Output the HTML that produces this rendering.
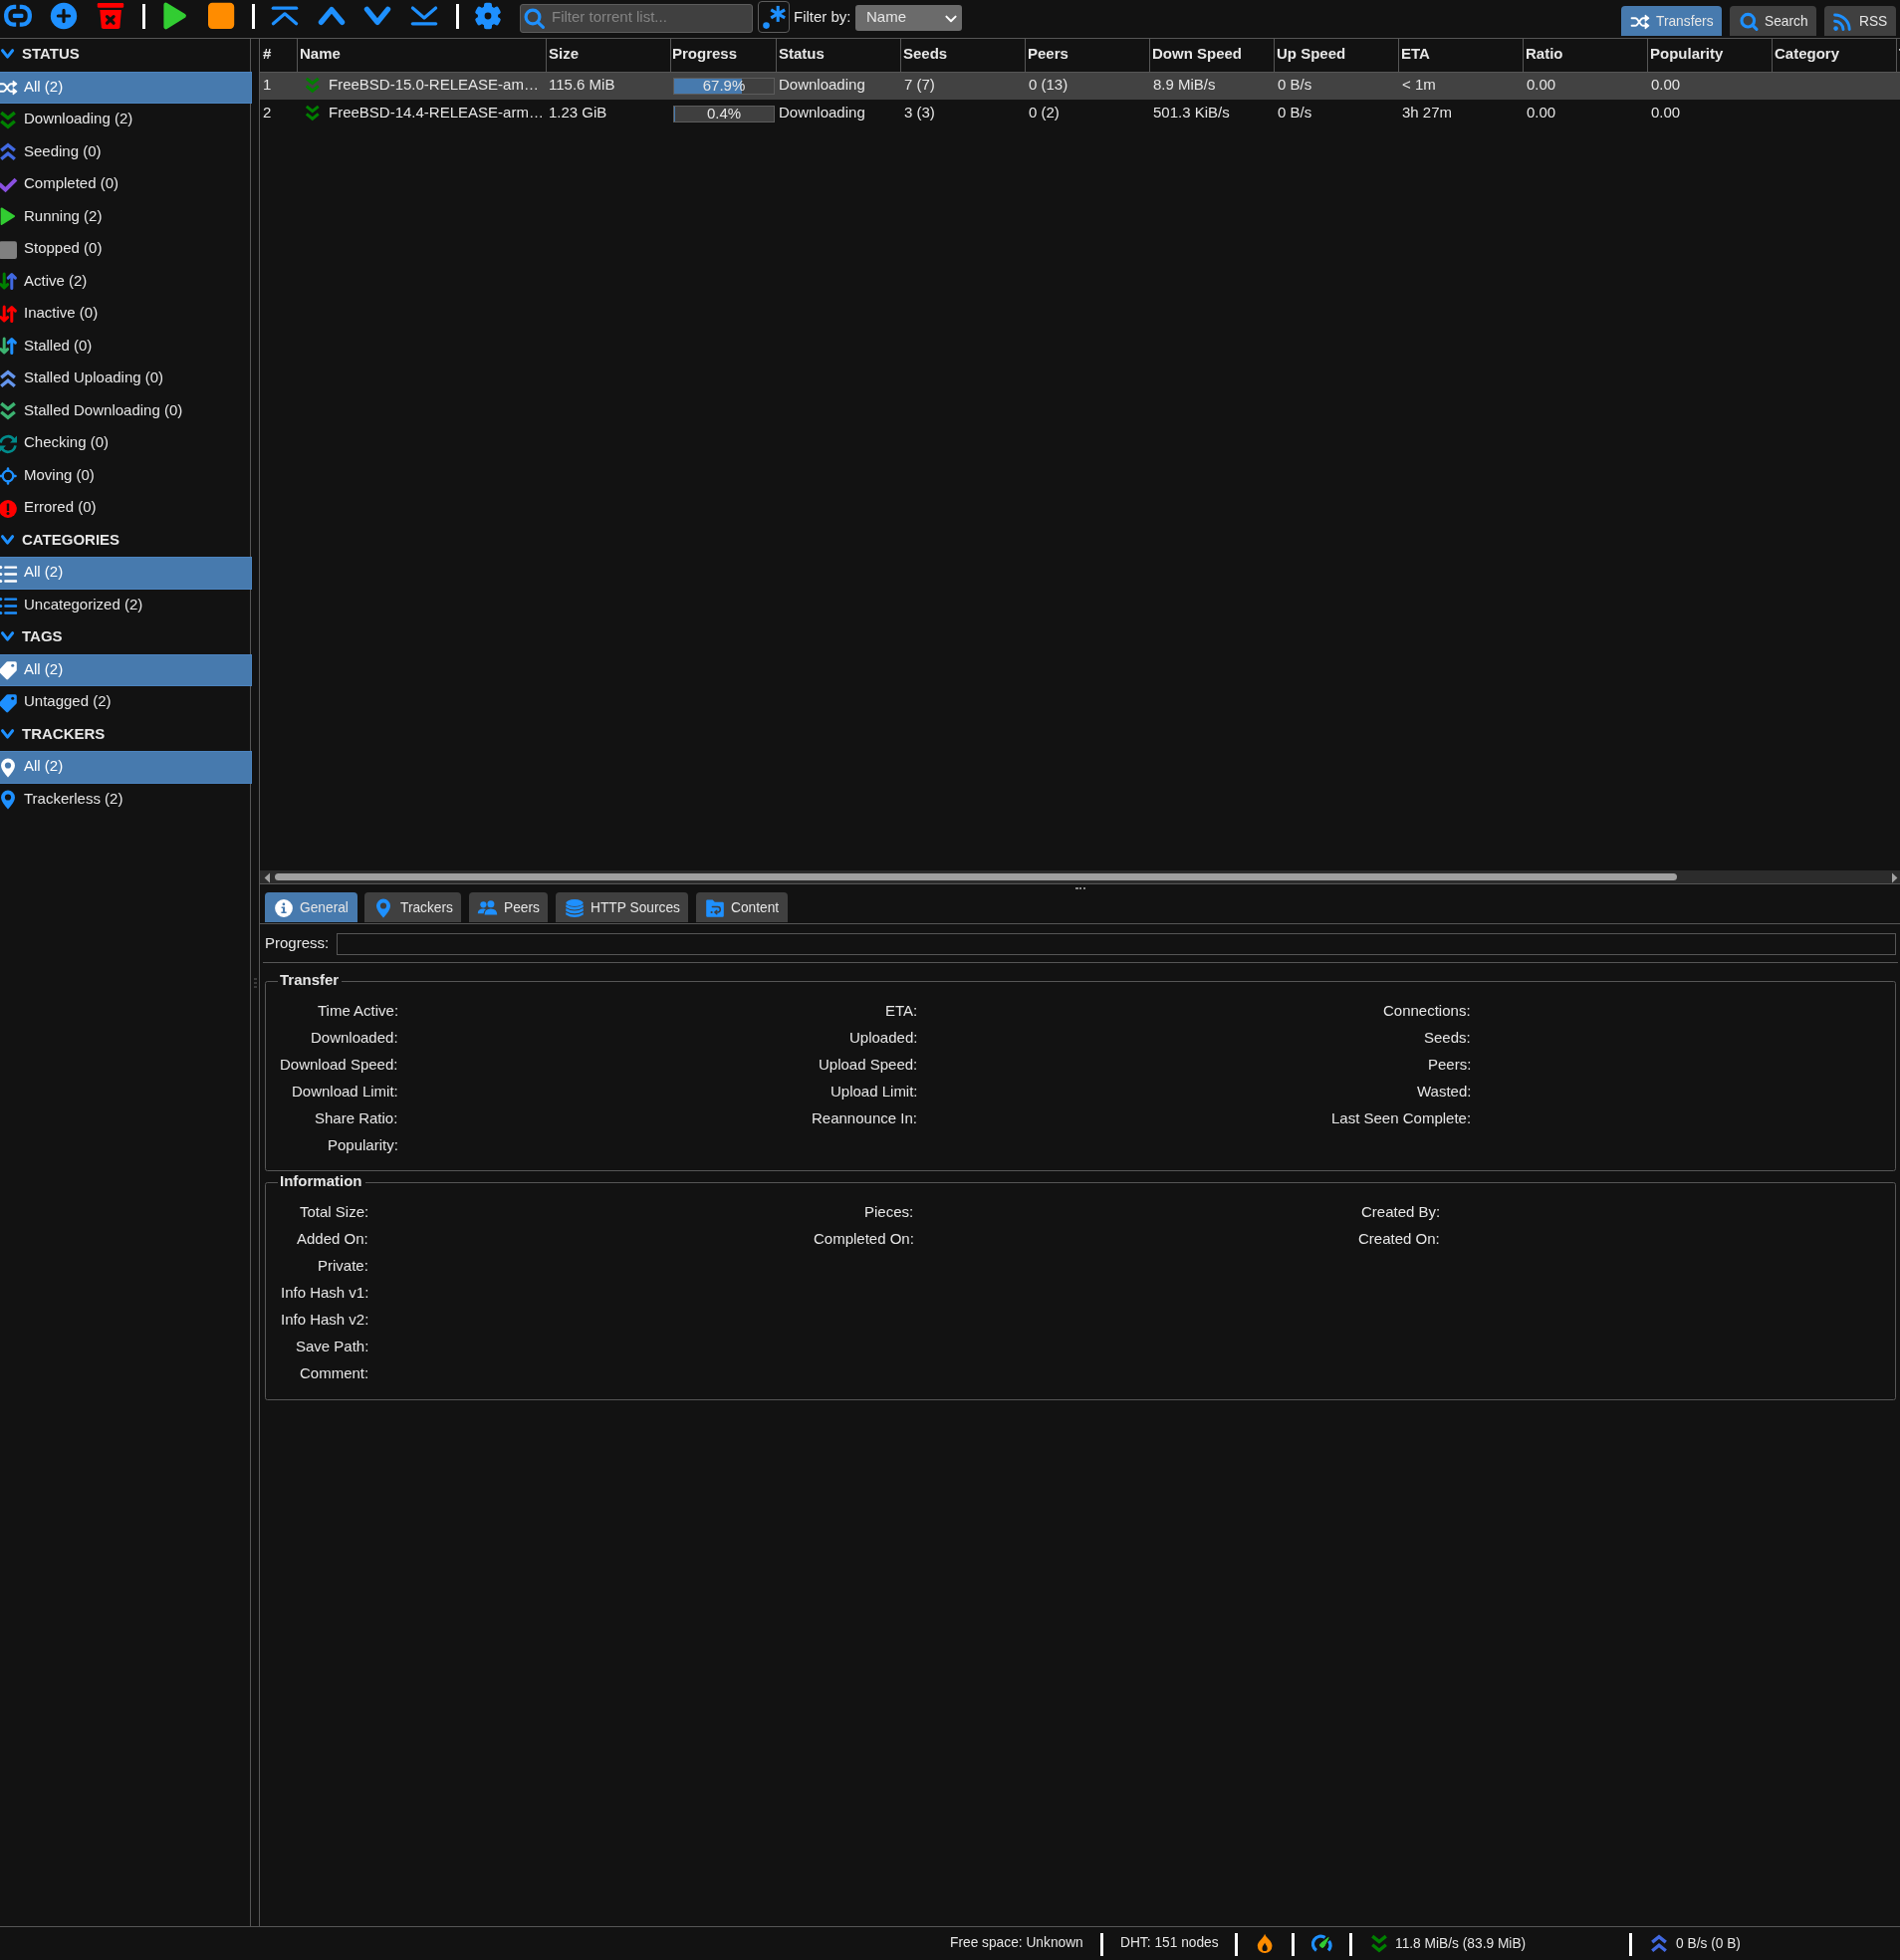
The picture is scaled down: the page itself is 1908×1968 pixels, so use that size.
<!DOCTYPE html>
<html lang="en"><head><meta charset="utf-8"><title>qBittorrent WebUI</title>
<style>
html,body{margin:0;padding:0;background:#121212;}
body{width:1908px;height:1968px;position:relative;overflow:hidden;color:#e6e6e6;font-family:"Liberation Sans",Arial,sans-serif;font-size:15px;}
.t{will-change:transform;position:absolute;white-space:nowrap;line-height:20px;height:20px;}
.r{position:absolute;box-sizing:border-box;}
svg{display:block;overflow:visible;}
</style></head><body>
<div id="frame">
<div class="r" style="left:0px;top:38px;width:1908px;height:1px;background:#565656;"></div>
<div class="r" style="left:251px;top:39px;width:1px;height:1896px;background:#565656;"></div>
<div class="r" style="left:260px;top:39px;width:1px;height:1896px;background:#565656;"></div>
<div class="r" style="left:0px;top:1934px;width:1908px;height:1px;background:#565656;"></div>
<div class="r" style="left:261px;top:72px;width:1647px;height:1px;background:#565656;"></div>
<div class="r" style="left:298px;top:39px;width:1px;height:33px;background:#565656;"></div>
<div class="r" style="left:548px;top:39px;width:1px;height:33px;background:#565656;"></div>
<div class="r" style="left:673px;top:39px;width:1px;height:33px;background:#565656;"></div>
<div class="r" style="left:779px;top:39px;width:1px;height:33px;background:#565656;"></div>
<div class="r" style="left:904px;top:39px;width:1px;height:33px;background:#565656;"></div>
<div class="r" style="left:1029px;top:39px;width:1px;height:33px;background:#565656;"></div>
<div class="r" style="left:1154px;top:39px;width:1px;height:33px;background:#565656;"></div>
<div class="r" style="left:1279px;top:39px;width:1px;height:33px;background:#565656;"></div>
<div class="r" style="left:1404px;top:39px;width:1px;height:33px;background:#565656;"></div>
<div class="r" style="left:1529px;top:39px;width:1px;height:33px;background:#565656;"></div>
<div class="r" style="left:1654px;top:39px;width:1px;height:33px;background:#565656;"></div>
<div class="r" style="left:1779px;top:39px;width:1px;height:33px;background:#565656;"></div>
<div class="r" style="left:1904px;top:39px;width:1px;height:33px;background:#565656;"></div>
</div>
<div id="toolbar">
<svg class="r" style="left:4px;top:2px;" width="28" height="28" viewBox="0 0 28 28"><g fill="none" stroke="#1e90ff" stroke-width="4.3"><path d="M12.2,4.9 H9.9 A7.7,7.7 0 0 0 2.2,12.6 V15 A7.7,7.7 0 0 0 9.9,22.7 H12.2"/><path d="M15.8,4.9 H18.1 A7.7,7.7 0 0 1 25.8,12.6 V15 A7.7,7.7 0 0 1 18.1,22.7 H15.8"/></g><rect x="8.8" y="11.8" width="10.6" height="4.2" rx="1.2" fill="#1e90ff"/></svg>
<svg class="r" style="left:50px;top:2px;" width="28" height="28" viewBox="0 0 28 28"><circle cx="14" cy="14" r="13.2" fill="#1e90ff"/><path stroke="#121212" stroke-width="3.2" stroke-linecap="round" d="M14,8.4 V19.6 M8.4,14 H19.6"/></svg>
<svg class="r" style="left:97px;top:2px;" width="28" height="28" viewBox="0 0 28 28"><rect x="0.8" y="1" width="26.4" height="4.8" rx="1.2" fill="#ff0000"/><path fill="#ff0000" d="M3.3,7.9 H24.9 L23.4,25.2 Q23.2,27 21.4,27 H6.8 Q5,27 4.8,25.2 Z"/><path stroke="#121212" stroke-width="3.2" stroke-linecap="round" d="M10.5,14.6 L17.1,21.2 M17.1,14.6 L10.5,21.2"/></svg>
<div class="r" style="left:143px;top:4px;width:3px;height:25px;background:#ffffff;"></div>
<svg class="r" style="left:160.5px;top:2px;" width="28" height="28" viewBox="0 0 28 28"><path fill="#32cd32" stroke="#32cd32" stroke-width="4.4" stroke-linejoin="round" d="M5.6,2.8 L23.7,13.95 L5.6,25.1 Z"/></svg>
<svg class="r" style="left:208px;top:2px;" width="28" height="28" viewBox="0 0 28 28"><rect x="1" y="0.8" width="26.2" height="26.2" rx="4.2" fill="#ff8c00"/></svg>
<div class="r" style="left:253px;top:4px;width:3px;height:25px;background:#ffffff;"></div>
<svg class="r" style="left:272px;top:2px;" width="28" height="28" viewBox="0 0 28 28"><g fill="none" stroke="#1e90ff" stroke-width="3.2" stroke-linecap="round" stroke-linejoin="round"><path d="M2.3,6.2 H25.7"/><path d="M2.4,21.8 L14,11.8 L25.6,21.8"/></g></svg>
<svg class="r" style="left:319px;top:2px;" width="28" height="28" viewBox="0 0 28 28"><path fill="none" stroke="#1e90ff" stroke-width="5.4" stroke-linecap="round" stroke-linejoin="round" d="M3.5,20.3 L14,7.6 L24.5,20.3"/></svg>
<svg class="r" style="left:365px;top:2px;" width="28" height="28" viewBox="0 0 28 28"><path fill="none" stroke="#1e90ff" stroke-width="5.4" stroke-linecap="round" stroke-linejoin="round" d="M3.5,7.4 L14,20.4 L24.5,7.4"/></svg>
<svg class="r" style="left:412px;top:2px;" width="28" height="28" viewBox="0 0 28 28"><g fill="none" stroke="#1e90ff" stroke-width="3.2" stroke-linecap="round" stroke-linejoin="round"><path d="M2.4,6 L14,16 L25.6,6"/><path d="M2.3,21.8 H25.7"/></g></svg>
<div class="r" style="left:458px;top:4px;width:3px;height:25px;background:#ffffff;"></div>
<svg class="r" style="left:475.7px;top:2px;" width="28" height="28" viewBox="0 0 28 28"><circle cx="14" cy="14" r="10.2" fill="#1e90ff"/><rect x="10" y="0.7" width="8" height="26.6" rx="2.2" fill="#1e90ff" transform="rotate(0 14 14)"/><rect x="10" y="0.7" width="8" height="26.6" rx="2.2" fill="#1e90ff" transform="rotate(60 14 14)"/><rect x="10" y="0.7" width="8" height="26.6" rx="2.2" fill="#1e90ff" transform="rotate(120 14 14)"/><circle cx="14" cy="14" r="3.4" fill="#121212"/></svg>
</div>
<div id="torrentsFilterToolbar">
<div class="r" style="left:522px;top:4px;width:234px;height:29px;background:#404040;border:1px solid #5c5c5c;border-radius:3px;"></div>
<svg class="r" style="left:526px;top:8px;" width="21" height="21" viewBox="0 0 21 21"><g fill="none" stroke="#1e90ff" stroke-width="3.2" stroke-linecap="round"><circle cx="9" cy="9" r="6.9"/><path d="M14.4,14.6 L19.4,19.4"/></g></svg>
<div class="t" style="left:554.3px;top:7.00px;font-size:15px;color:#848484;">Filter torrent list...</div>
<div class="r" style="left:761px;top:1px;width:32px;height:32px;border:1px solid #5c5c5c;border-radius:4px;"></div>
<svg class="r" style="left:761px;top:1px;" width="32" height="32" viewBox="0 0 32 32"><circle cx="8.5" cy="24.6" r="3.3" fill="#1e90ff"/><g stroke="#1e90ff" stroke-width="3.1" stroke-linecap="butt"><path d="M20.20,4.90 L20.20,20.90"/><path d="M27.13,8.90 L13.27,16.90"/><path d="M27.13,16.90 L13.27,8.90"/></g></svg>
<div class="t" style="left:797px;top:7.00px;font-size:15px;">Filter by:</div>
<div class="r" style="left:859px;top:5px;width:107px;height:26px;background:#6b6b6b;border-radius:3px;"></div>
<div class="t" style="left:870px;top:7.00px;font-size:15px;">Name</div>
<svg class="r" style="left:948px;top:14px;" width="14" height="10" viewBox="0 0 14 10"><polyline fill="none" stroke="#ffffff" stroke-width="2" stroke-linecap="round" stroke-linejoin="round" points="2.4,2.6 7,7.3 11.6,2.6"/></svg>
</div>
<div id="mainWindowTabs">
<div class="r" style="left:1628px;top:6px;width:101.20000000000005px;height:30px;background:#477aae;border-radius:4px 4px 0 0;"></div>
<svg class="r" style="left:1636.8px;top:12.2px;" width="20" height="20" viewBox="0 0 20 20"><g fill="none" stroke="#ffffff" stroke-width="1.9" stroke-linecap="round" stroke-linejoin="round"><path d="M1.6,6.2 H5.2 C8.4,6.2 9.8,13.8 13,13.8 H15.5"/><path d="M1.6,13.8 H5.2 C8.4,13.8 9.8,6.2 13,6.2 H15.5"/></g><path fill="#ffffff" stroke="#ffffff" stroke-width="1.3" stroke-linejoin="round" d="M15.3,3.4 L18.7,6.2 L15.3,9 Z M15.3,11 L18.7,13.8 L15.3,16.6 Z"/></svg>
<div class="t" style="left:1663px;top:12.00px;font-size:13.75px;">Transfers</div>
<div class="r" style="left:1737px;top:6px;width:87.20000000000005px;height:30px;background:#404040;border-radius:4px 4px 0 0;"></div>
<svg class="r" style="left:1746.5px;top:12.2px;" width="20" height="20" viewBox="0 0 20 20"><g fill="none" stroke="#1e90ff" stroke-width="3.1" stroke-linecap="round"><circle cx="8.3" cy="8.7" r="6.3"/><path d="M13.2,13.6 L17,17.4"/></g></svg>
<div class="t" style="left:1772.3px;top:12.00px;font-size:13.75px;">Search</div>
<div class="r" style="left:1831.8px;top:6px;width:72.20000000000005px;height:30px;background:#404040;border-radius:4px 4px 0 0;"></div>
<svg class="r" style="left:1840px;top:12.2px;" width="20" height="20" viewBox="0 0 20 20"><circle cx="3.6" cy="16.6" r="2.3" fill="#1e90ff"/><g fill="none" stroke="#1e90ff" stroke-width="2.9" stroke-linecap="round"><path d="M2.6,9.2 A8.6,8.6 0 0 1 11,17.6"/><path d="M2.6,3 A14.6,14.6 0 0 1 17.2,17.6"/></g></svg>
<div class="t" style="left:1867.1px;top:12.00px;font-size:13.75px;">RSS</div>
</div>
<div id="filtersColumn">
<svg class="r" style="left:0px;top:47.1px;" width="16" height="14" viewBox="0 0 16 14"><polyline fill="none" stroke="#1e90ff" stroke-width="3" stroke-linecap="round" stroke-linejoin="round" points="2.5,3.7 7.55,10.1 12.6,3.7"/></svg>
<div class="t" style="left:22px;top:44.00px;font-size:15px;font-weight:bold;">STATUS</div>
<div class="r" style="left:-2px;top:72px;width:255px;height:32px;background:#477aae;border:1px solid #4c84c0;"></div>
<svg class="r" style="left:-1.8px;top:78.25px;" width="20" height="20" viewBox="0 0 20 20"><g fill="none" stroke="#ffffff" stroke-width="1.9" stroke-linecap="round" stroke-linejoin="round"><path d="M-1,6.2 H5.2 C8.4,6.2 9.8,13.8 13,13.8 H15.5"/><path d="M-1,13.8 H5.2 C8.4,13.8 9.8,6.2 13,6.2 H15.5"/></g><path fill="#ffffff" stroke="#ffffff" stroke-width="1.3" stroke-linejoin="round" d="M15.3,3.4 L18.7,6.2 L15.3,9 Z M15.3,11 L18.7,13.8 L15.3,16.6 Z"/></svg>
<div class="t" style="left:23.8px;top:77.00px;font-size:15px;color:#ffffff;">All (2)</div>
<svg class="r" style="left:-1.8px;top:110.75px;" width="20" height="20" viewBox="0 0 20 20"><g fill="none" stroke="#008000" stroke-width="3.4" stroke-linejoin="miter"><polyline points="3.2,2.1 10,7.6 16.8,2.1"/><polyline points="3.2,10.8 10,16.3 16.8,10.8"/></g></svg>
<div class="t" style="left:23.8px;top:109.00px;font-size:15px;">Downloading (2)</div>
<svg class="r" style="left:-1.8px;top:143.25px;" width="20" height="20" viewBox="0 0 20 20"><g fill="none" stroke="#4169e1" stroke-width="3.4" stroke-linejoin="miter"><polyline points="3.2,8.1 10,2.6 16.8,8.1"/><polyline points="3.2,16.8 10,11.3 16.8,16.8"/></g></svg>
<div class="t" style="left:23.8px;top:142.00px;font-size:15px;">Seeding (0)</div>
<svg class="r" style="left:-1.8px;top:175.75px;" width="20" height="20" viewBox="0 0 20 20"><polyline fill="none" stroke="#8a50e0" stroke-width="4" points="1.2,8.8 7.5,14.4 18,4.1"/></svg>
<div class="t" style="left:23.8px;top:174.00px;font-size:15px;">Completed (0)</div>
<svg class="r" style="left:-1.8px;top:208.25px;" width="20" height="20" viewBox="0 0 20 20"><path fill="#32cd32" stroke="#32cd32" stroke-width="2" stroke-linejoin="round" d="M3.6,1.4 L16,9.2 L3.6,17 Z"/></svg>
<div class="t" style="left:23.8px;top:207.00px;font-size:15px;">Running (2)</div>
<svg class="r" style="left:-1.8px;top:240.75px;" width="20" height="20" viewBox="0 0 20 20"><rect x="1.2" y="1.2" width="17.8" height="17.8" rx="2.2" fill="#808080"/></svg>
<div class="t" style="left:23.8px;top:239.00px;font-size:15px;">Stopped (0)</div>
<svg class="r" style="left:-1.8px;top:273.25px;" width="20" height="20" viewBox="0 0 20 20"><g fill="none" stroke-width="3" stroke-linecap="round" stroke-linejoin="round"><path stroke="#008000" d="M6.2,1.9 V15.6 M2.8,12.6 L6.2,16 L9.6,12.6"/><path stroke="#4169e1" d="M13.8,16.6 V2.9 M10.2,6.1 L13.8,2.5 L17.4,6.1"/></g></svg>
<div class="t" style="left:23.8px;top:272.00px;font-size:15px;">Active (2)</div>
<svg class="r" style="left:-1.8px;top:305.75px;" width="20" height="20" viewBox="0 0 20 20"><g fill="none" stroke-width="3" stroke-linecap="round" stroke-linejoin="round"><path stroke="#ff0000" d="M6.2,1.9 V15.6 M2.8,12.6 L6.2,16 L9.6,12.6"/><path stroke="#ff0000" d="M13.8,16.6 V2.9 M10.2,6.1 L13.8,2.5 L17.4,6.1"/></g></svg>
<div class="t" style="left:23.8px;top:304.00px;font-size:15px;">Inactive (0)</div>
<svg class="r" style="left:-1.8px;top:338.25px;" width="20" height="20" viewBox="0 0 20 20"><g fill="none" stroke-width="3" stroke-linecap="round" stroke-linejoin="round"><path stroke="#3cb371" d="M6.2,1.9 V15.6 M2.8,12.6 L6.2,16 L9.6,12.6"/><path stroke="#1e90ff" d="M13.8,16.6 V2.9 M10.2,6.1 L13.8,2.5 L17.4,6.1"/></g></svg>
<div class="t" style="left:23.8px;top:337.00px;font-size:15px;">Stalled (0)</div>
<svg class="r" style="left:-1.8px;top:370.75px;" width="20" height="20" viewBox="0 0 20 20"><g fill="none" stroke="#6495ed" stroke-width="3.4" stroke-linejoin="miter"><polyline points="3.2,8.1 10,2.6 16.8,8.1"/><polyline points="3.2,16.8 10,11.3 16.8,16.8"/></g></svg>
<div class="t" style="left:23.8px;top:369.00px;font-size:15px;">Stalled Uploading (0)</div>
<svg class="r" style="left:-1.8px;top:403.25px;" width="20" height="20" viewBox="0 0 20 20"><g fill="none" stroke="#3cb371" stroke-width="3.4" stroke-linejoin="miter"><polyline points="3.2,2.1 10,7.6 16.8,2.1"/><polyline points="3.2,10.8 10,16.3 16.8,10.8"/></g></svg>
<div class="t" style="left:23.8px;top:402.00px;font-size:15px;">Stalled Downloading (0)</div>
<svg class="r" style="left:-1.8px;top:435.75px;" width="20" height="20" viewBox="0 0 20 20"><g fill="none" stroke="#008b8b" stroke-width="2.6"><path d="M2.6,8.6 A7.4,7.4 0 0 1 16,5.4"/><path d="M17.4,11.4 A7.4,7.4 0 0 1 4,14.6"/></g><path fill="#008b8b" d="M19,1.4 V8.4 H12 Z M1,18.6 V11.6 H8 Z"/></svg>
<div class="t" style="left:23.8px;top:434.00px;font-size:15px;">Checking (0)</div>
<svg class="r" style="left:-1.8px;top:468.25px;" width="20" height="20" viewBox="0 0 20 20"><circle cx="10" cy="10" r="5.3" fill="none" stroke="#1e90ff" stroke-width="2.3"/><g stroke="#1e90ff" stroke-width="2.6" stroke-linecap="round"><path d="M10,2.5 V4.6 M10,15.4 V17.5 M2.5,10 H4.6 M15.4,10 H17.5"/></g></svg>
<div class="t" style="left:23.8px;top:467.00px;font-size:15px;">Moving (0)</div>
<svg class="r" style="left:-1.8px;top:500.75px;" width="20" height="20" viewBox="0 0 20 20"><circle cx="10" cy="10" r="8.9" fill="#ff0000"/><rect x="8.8" y="4.6" width="2.4" height="7.4" rx="0.6" fill="#121212"/><circle cx="10" cy="14.6" r="1.5" fill="#121212"/></svg>
<div class="t" style="left:23.8px;top:499.00px;font-size:15px;">Errored (0)</div>
<svg class="r" style="left:0px;top:534.6px;" width="16" height="14" viewBox="0 0 16 14"><polyline fill="none" stroke="#1e90ff" stroke-width="3" stroke-linecap="round" stroke-linejoin="round" points="2.5,3.7 7.55,10.1 12.6,3.7"/></svg>
<div class="t" style="left:22px;top:532.00px;font-size:15px;font-weight:bold;">CATEGORIES</div>
<div class="r" style="left:-2px;top:559px;width:255px;height:33px;background:#477aae;border:1px solid #4c84c0;"></div>
<svg class="r" style="left:-1.8px;top:565.75px;" width="20" height="20" viewBox="0 0 20 20"><rect x="6.3" y="2.45" width="12.8" height="2.3" rx="0.6" fill="#ffffff"/><circle cx="2.7" cy="3.6" r="1.6" fill="#ffffff"/><rect x="6.3" y="9.35" width="12.8" height="2.3" rx="0.6" fill="#ffffff"/><circle cx="2.7" cy="10.5" r="1.6" fill="#ffffff"/><rect x="6.3" y="16.35" width="12.8" height="2.3" rx="0.6" fill="#ffffff"/><circle cx="2.7" cy="17.5" r="1.6" fill="#ffffff"/></svg>
<div class="t" style="left:23.8px;top:564.00px;font-size:15px;color:#ffffff;">All (2)</div>
<svg class="r" style="left:-1.8px;top:598.25px;" width="20" height="20" viewBox="0 0 20 20"><rect x="6.3" y="2.45" width="12.8" height="2.3" rx="0.6" fill="#1e90ff"/><circle cx="2.7" cy="3.6" r="1.6" fill="#1e90ff"/><rect x="6.3" y="9.35" width="12.8" height="2.3" rx="0.6" fill="#1e90ff"/><circle cx="2.7" cy="10.5" r="1.6" fill="#1e90ff"/><rect x="6.3" y="16.35" width="12.8" height="2.3" rx="0.6" fill="#1e90ff"/><circle cx="2.7" cy="17.5" r="1.6" fill="#1e90ff"/></svg>
<div class="t" style="left:23.8px;top:597.00px;font-size:15px;">Uncategorized (2)</div>
<svg class="r" style="left:0px;top:632.1px;" width="16" height="14" viewBox="0 0 16 14"><polyline fill="none" stroke="#1e90ff" stroke-width="3" stroke-linecap="round" stroke-linejoin="round" points="2.5,3.7 7.55,10.1 12.6,3.7"/></svg>
<div class="t" style="left:22px;top:629.00px;font-size:15px;font-weight:bold;">TAGS</div>
<div class="r" style="left:-2px;top:657px;width:255px;height:32px;background:#477aae;border:1px solid #4c84c0;"></div>
<svg class="r" style="left:-1.8px;top:663.25px;" width="20" height="20" viewBox="0 0 20 20"><path fill="#ffffff" d="M9.6,1.3 H17.2 Q18.8,1.3 18.8,2.9 V9.6 Q18.8,10.3 18.3,10.8 L10.1,19 Q9.2,19.8 8.3,19 L0.9,11.6 Q0.1,10.7 0.9,9.8 L8.4,1.8 Q8.9,1.3 9.6,1.3 Z"/><circle cx="14.7" cy="5.3" r="1.5" fill="#477aae"/></svg>
<div class="t" style="left:23.8px;top:662.00px;font-size:15px;color:#ffffff;">All (2)</div>
<svg class="r" style="left:-1.8px;top:695.75px;" width="20" height="20" viewBox="0 0 20 20"><path fill="#1e90ff" d="M9.6,1.3 H17.2 Q18.8,1.3 18.8,2.9 V9.6 Q18.8,10.3 18.3,10.8 L10.1,19 Q9.2,19.8 8.3,19 L0.9,11.6 Q0.1,10.7 0.9,9.8 L8.4,1.8 Q8.9,1.3 9.6,1.3 Z"/><circle cx="14.7" cy="5.3" r="1.5" fill="#121212"/></svg>
<div class="t" style="left:23.8px;top:694.00px;font-size:15px;">Untagged (2)</div>
<svg class="r" style="left:0px;top:729.6px;" width="16" height="14" viewBox="0 0 16 14"><polyline fill="none" stroke="#1e90ff" stroke-width="3" stroke-linecap="round" stroke-linejoin="round" points="2.5,3.7 7.55,10.1 12.6,3.7"/></svg>
<div class="t" style="left:22px;top:727.00px;font-size:15px;font-weight:bold;">TRACKERS</div>
<div class="r" style="left:-2px;top:754px;width:255px;height:33px;background:#477aae;border:1px solid #4c84c0;"></div>
<svg class="r" style="left:-1.8px;top:760.75px;" width="20" height="20" viewBox="0 0 20 20"><path fill="#ffffff" d="M10,19.6 C10,19.6 3,12.4 3,7.6 A7,7 0 0 1 17,7.6 C17,12.4 10,19.6 10,19.6 Z"/><circle cx="10" cy="7.5" r="3.1" fill="#477aae"/></svg>
<div class="t" style="left:23.8px;top:759.00px;font-size:15px;color:#ffffff;">All (2)</div>
<svg class="r" style="left:-1.8px;top:793.25px;" width="20" height="20" viewBox="0 0 20 20"><path fill="#1e90ff" d="M10,19.6 C10,19.6 3,12.4 3,7.6 A7,7 0 0 1 17,7.6 C17,12.4 10,19.6 10,19.6 Z"/><circle cx="10" cy="7.5" r="3.1" fill="#121212"/></svg>
<div class="t" style="left:23.8px;top:792.00px;font-size:15px;">Trackerless (2)</div>
<div class="r" style="left:255px;top:982.3px;width:3px;height:2px;background:#3a3a3a;"></div>
<div class="r" style="left:255px;top:986px;width:3px;height:2px;background:#3a3a3a;"></div>
<div class="r" style="left:255px;top:990px;width:3px;height:2px;background:#3a3a3a;"></div>
</div>
<div id="torrentsTable">
<div class="t" style="left:264px;top:44.00px;font-size:15px;font-weight:bold;">#</div>
<div class="t" style="left:301px;top:44.00px;font-size:15px;font-weight:bold;">Name</div>
<div class="t" style="left:551px;top:44.00px;font-size:15px;font-weight:bold;">Size</div>
<div class="t" style="left:675px;top:44.00px;font-size:15px;font-weight:bold;">Progress</div>
<div class="t" style="left:782px;top:44.00px;font-size:15px;font-weight:bold;">Status</div>
<div class="t" style="left:907px;top:44.00px;font-size:15px;font-weight:bold;">Seeds</div>
<div class="t" style="left:1032px;top:44.00px;font-size:15px;font-weight:bold;">Peers</div>
<div class="t" style="left:1157px;top:44.00px;font-size:15px;font-weight:bold;">Down Speed</div>
<div class="t" style="left:1282px;top:44.00px;font-size:15px;font-weight:bold;">Up Speed</div>
<div class="t" style="left:1407px;top:44.00px;font-size:15px;font-weight:bold;">ETA</div>
<div class="t" style="left:1532px;top:44.00px;font-size:15px;font-weight:bold;">Ratio</div>
<div class="t" style="left:1657px;top:44.00px;font-size:15px;font-weight:bold;">Popularity</div>
<div class="t" style="left:1782px;top:44.00px;font-size:15px;font-weight:bold;">Category</div>
<div class="t" style="left:1907px;top:44.00px;font-size:15px;font-weight:bold;">Tags</div>
<div class="r" style="left:261px;top:73px;width:1647px;height:27px;background:#424242;"></div>
<div class="t" style="left:263.9px;top:75.00px;font-size:15px;">1</div>
<svg class="r" style="left:305.0px;top:76.7px;" width="17.5" height="17.5" viewBox="0 0 20 20"><g fill="none" stroke="#008000" stroke-width="3.4" stroke-linejoin="miter"><polyline points="3.2,2.1 10,7.6 16.8,2.1"/><polyline points="3.2,10.8 10,16.3 16.8,10.8"/></g></svg>
<div class="t" style="left:330px;top:75.00px;font-size:15px;width:217.6px;overflow:hidden;text-overflow:ellipsis;">FreeBSD-15.0-RELEASE-amd64-bootonly.iso</div>
<div class="t" style="left:551.4px;top:75.00px;font-size:15px;">115.6 MiB</div>
<div class="r" style="left:676px;top:78px;width:102px;height:17px;background:#3f3f3f;border:1px solid #5c5c5c;"></div>
<div class="r" style="left:677px;top:79px;width:67.9px;height:15px;background:#477aae;"></div>
<div class="t" style="left:677.00px;width:100px;top:76.00px;font-size:15px;text-align:center;">67.9%</div>
<div class="t" style="left:782.4px;top:75.00px;font-size:15px;">Downloading</div>
<div class="t" style="left:907.6999999999999px;top:75.00px;font-size:15px;">7 (7)</div>
<div class="t" style="left:1032.7px;top:75.00px;font-size:15px;">0 (13)</div>
<div class="t" style="left:1157.6px;top:75.00px;font-size:15px;">8.9 MiB/s</div>
<div class="t" style="left:1282.5px;top:75.00px;font-size:15px;">0 B/s</div>
<div class="t" style="left:1407.6px;top:75.00px;font-size:15px;">&lt; 1m</div>
<div class="t" style="left:1532.6px;top:75.00px;font-size:15px;">0.00</div>
<div class="t" style="left:1657.5px;top:75.00px;font-size:15px;">0.00</div>
<div class="t" style="left:263.9px;top:103.00px;font-size:15px;">2</div>
<svg class="r" style="left:305.0px;top:104.8px;" width="17.5" height="17.5" viewBox="0 0 20 20"><g fill="none" stroke="#008000" stroke-width="3.4" stroke-linejoin="miter"><polyline points="3.2,2.1 10,7.6 16.8,2.1"/><polyline points="3.2,10.8 10,16.3 16.8,10.8"/></g></svg>
<div class="t" style="left:330px;top:103.00px;font-size:15px;width:217.6px;overflow:hidden;text-overflow:ellipsis;">FreeBSD-14.4-RELEASE-arm64-aarch64-disc1.iso</div>
<div class="t" style="left:551.4px;top:103.00px;font-size:15px;">1.23 GiB</div>
<div class="r" style="left:676px;top:106.1px;width:102px;height:17px;background:#3f3f3f;border:1px solid #5c5c5c;"></div>
<div class="r" style="left:677px;top:107.1px;width:0.4px;height:15px;background:#477aae;"></div>
<div class="t" style="left:677.00px;width:100px;top:104.00px;font-size:15px;text-align:center;">0.4%</div>
<div class="t" style="left:782.4px;top:103.00px;font-size:15px;">Downloading</div>
<div class="t" style="left:907.6999999999999px;top:103.00px;font-size:15px;">3 (3)</div>
<div class="t" style="left:1032.7px;top:103.00px;font-size:15px;">0 (2)</div>
<div class="t" style="left:1157.6px;top:103.00px;font-size:15px;">501.3 KiB/s</div>
<div class="t" style="left:1282.5px;top:103.00px;font-size:15px;">0 B/s</div>
<div class="t" style="left:1407.6px;top:103.00px;font-size:15px;">3h 27m</div>
<div class="t" style="left:1532.6px;top:103.00px;font-size:15px;">0.00</div>
<div class="t" style="left:1657.5px;top:103.00px;font-size:15px;">0.00</div>
</div>
<div id="tableScrollbar">
<div class="r" style="left:261px;top:874px;width:1647px;height:13px;background:#2c2c2c;"></div>
<div class="r" style="left:261px;top:887px;width:1647px;height:1px;background:#565656;"></div>
<div class="r" style="left:275.8px;top:877px;width:1408px;height:7px;background:#a1a1a1;border-radius:3.5px;"></div>
<svg class="r" style="left:264.5px;top:875.5px;" width="7" height="11" viewBox="0 0 7 11"><path fill="#a3a3a3" d="M6,0.6 V10.4 L0.6,5.5 Z"/></svg>
<svg class="r" style="left:1899px;top:875.5px;" width="7" height="11" viewBox="0 0 7 11"><path fill="#a3a3a3" d="M1,0.6 V10.4 L6.4,5.5 Z"/></svg>
<div class="r" style="left:1080px;top:891.1px;width:2.5px;height:1.9px;background:#8a8a8a;"></div>
<div class="r" style="left:1083.8px;top:891.1px;width:2.5px;height:1.9px;background:#8a8a8a;"></div>
<div class="r" style="left:1087.6px;top:891.1px;width:2.5px;height:1.9px;background:#8a8a8a;"></div>
</div>
<div id="propertiesTabs">
<div class="r" style="left:261px;top:927px;width:1647px;height:1px;background:#565656;"></div>
<div class="r" style="left:266px;top:896px;width:93px;height:30.4px;background:#477aae;border-radius:4px 4px 0 0;"></div>
<svg class="r" style="left:275px;top:902px;" width="20" height="20" viewBox="0 0 20 20"><circle cx="10" cy="10" r="8.9" fill="#ffffff"/><circle cx="9.9" cy="5.9" r="1.35" fill="#477aae"/><path fill="#477aae" d="M7.6,8.4 H11.1 V13.4 H12.6 V14.9 H7.4 V13.4 H9 V9.9 H7.6 Z"/></svg>
<div class="t" style="left:301.4px;top:902.00px;font-size:13.75px;">General</div>
<div class="r" style="left:366px;top:896px;width:97px;height:30.4px;background:#404040;border-radius:4px 4px 0 0;"></div>
<svg class="r" style="left:375px;top:902px;" width="20" height="20" viewBox="0 0 20 20"><path fill="#1e90ff" d="M10,19.6 C10,19.6 3,12.4 3,7.6 A7,7 0 0 1 17,7.6 C17,12.4 10,19.6 10,19.6 Z"/><circle cx="10" cy="7.5" r="3.1" fill="#3d3d3d"/></svg>
<div class="t" style="left:401.9px;top:902.00px;font-size:13.75px;">Trackers</div>
<div class="r" style="left:471px;top:896px;width:78.70000000000005px;height:30.4px;background:#404040;border-radius:4px 4px 0 0;"></div>
<svg class="r" style="left:478.8px;top:902px;" width="20" height="20" viewBox="0 0 20 20"><circle cx="6.4" cy="6.3" r="3.1" fill="#1e90ff"/><circle cx="13.9" cy="5.7" r="3.5" fill="#1e90ff"/><path fill="#1e90ff" d="M0.8,15.2 Q0.8,10.6 6.4,10.6 Q8,10.6 9,11 Q6.6,12.4 6.6,15.2 Z"/><path fill="#1e90ff" d="M7.6,16.6 Q7.6,10.6 13.9,10.6 Q20.2,10.6 20.2,16.6 Z"/></svg>
<div class="t" style="left:506px;top:902.00px;font-size:13.75px;">Peers</div>
<div class="r" style="left:558px;top:896px;width:133px;height:30.4px;background:#404040;border-radius:4px 4px 0 0;"></div>
<svg class="r" style="left:567.3px;top:902px;" width="20" height="20" viewBox="0 0 20 20"><ellipse cx="10" cy="4.6" rx="8.7" ry="3.5" fill="#1e90ff"/><path fill="#1e90ff" d="M1.3,6.3 Q10,11.3 18.7,6.3 V9.0 Q10,14.0 1.3,9.0 Z"/><path fill="#1e90ff" d="M1.3,10.1 Q10,15.1 18.7,10.1 V12.8 Q10,17.8 1.3,12.8 Z"/><path fill="#1e90ff" d="M1.3,13.9 Q10,18.9 18.7,13.9 V16.6 Q10,21.6 1.3,16.6 Z"/></svg>
<div class="t" style="left:592.6px;top:902.00px;font-size:13.75px;">HTTP Sources</div>
<div class="r" style="left:698.7px;top:896px;width:92.29999999999995px;height:30.4px;background:#404040;border-radius:4px 4px 0 0;"></div>
<svg class="r" style="left:707.8px;top:902px;" width="20" height="20" viewBox="0 0 20 20"><path fill="#1e90ff" d="M1.2,2.6 Q1.2,1.4 2.4,1.4 H7.6 L9.8,3.8 H17.6 Q18.8,3.8 18.8,5 V17.6 Q18.8,18.8 17.6,18.8 H2.4 Q1.2,18.8 1.2,17.6 Z"/><g fill="none" stroke="#3d3d3d" stroke-width="1.5" stroke-linecap="round"><path d="M7.4,8.6 H12.6 A2.7,2.7 0 0 1 12.6,14 H10.4"/><path d="M11.8,12.2 L10,14 L11.8,15.8"/></g><circle cx="6.6" cy="14" r="1.1" fill="#3d3d3d"/></svg>
<div class="t" style="left:734.1px;top:902.00px;font-size:13.75px;">Content</div>
</div>
<div id="propGeneral">
<div class="t" style="left:266px;top:937.00px;font-size:15px;">Progress:</div>
<div class="r" style="left:338px;top:937.4px;width:1566px;height:21.6px;border:1px solid #565656;"></div>
<div class="r" style="left:264px;top:966px;width:1642px;height:1px;background:#565656;"></div>
<div class="r" style="left:266px;top:985.3px;width:1638px;height:190.4px;border:1px solid #565656;border-radius:2.5px;"></div>
<div class="r" style="left:278.7px;top:983.3px;width:64.8px;height:5px;background:#121212;"></div>
<div class="t" style="left:280.6px;top:974.00px;font-size:15px;font-weight:bold;">Transfer</div>
<div class="r" style="left:266px;top:1187.4px;width:1638px;height:218.2px;border:1px solid #565656;border-radius:2.5px;"></div>
<div class="r" style="left:278.7px;top:1185.4px;width:88.8px;height:5px;background:#121212;"></div>
<div class="t" style="left:280.6px;top:1176.00px;font-size:15px;font-weight:bold;">Information</div>
<div class="t" style="right:1508.20px;top:1005.00px;font-size:15px;text-align:right;">Time Active:</div>
<div class="t" style="right:1508.20px;top:1032.00px;font-size:15px;text-align:right;">Downloaded:</div>
<div class="t" style="right:1508.20px;top:1059.00px;font-size:15px;text-align:right;">Download Speed:</div>
<div class="t" style="right:1508.20px;top:1086.00px;font-size:15px;text-align:right;">Download Limit:</div>
<div class="t" style="right:1508.20px;top:1113.00px;font-size:15px;text-align:right;">Share Ratio:</div>
<div class="t" style="right:1508.20px;top:1140.00px;font-size:15px;text-align:right;">Popularity:</div>
<div class="t" style="right:986.60px;top:1005.00px;font-size:15px;text-align:right;">ETA:</div>
<div class="t" style="right:986.60px;top:1032.00px;font-size:15px;text-align:right;">Uploaded:</div>
<div class="t" style="right:986.60px;top:1059.00px;font-size:15px;text-align:right;">Upload Speed:</div>
<div class="t" style="right:986.60px;top:1086.00px;font-size:15px;text-align:right;">Upload Limit:</div>
<div class="t" style="right:986.60px;top:1113.00px;font-size:15px;text-align:right;">Reannounce In:</div>
<div class="t" style="right:431.00px;top:1005.00px;font-size:15px;text-align:right;">Connections:</div>
<div class="t" style="right:431.00px;top:1032.00px;font-size:15px;text-align:right;">Seeds:</div>
<div class="t" style="right:431.00px;top:1059.00px;font-size:15px;text-align:right;">Peers:</div>
<div class="t" style="right:431.00px;top:1086.00px;font-size:15px;text-align:right;">Wasted:</div>
<div class="t" style="right:431.00px;top:1113.00px;font-size:15px;text-align:right;">Last Seen Complete:</div>
<div class="t" style="right:1538.00px;top:1207.00px;font-size:15px;text-align:right;">Total Size:</div>
<div class="t" style="right:1538.00px;top:1234.00px;font-size:15px;text-align:right;">Added On:</div>
<div class="t" style="right:1538.00px;top:1261.00px;font-size:15px;text-align:right;">Private:</div>
<div class="t" style="right:1538.00px;top:1288.00px;font-size:15px;text-align:right;">Info Hash v1:</div>
<div class="t" style="right:1538.00px;top:1315.00px;font-size:15px;text-align:right;">Info Hash v2:</div>
<div class="t" style="right:1538.00px;top:1342.00px;font-size:15px;text-align:right;">Save Path:</div>
<div class="t" style="right:1538.00px;top:1369.00px;font-size:15px;text-align:right;">Comment:</div>
<div class="t" style="right:990.60px;top:1207.00px;font-size:15px;text-align:right;">Pieces:</div>
<div class="t" style="right:990.60px;top:1234.00px;font-size:15px;text-align:right;">Completed On:</div>
<div class="t" style="right:462.00px;top:1207.00px;font-size:15px;text-align:right;">Created By:</div>
<div class="t" style="right:462.00px;top:1234.00px;font-size:15px;text-align:right;">Created On:</div>
</div>
<div id="desktopFooter">
<div class="t" style="left:954.2px;top:1941.00px;font-size:13.75px;">Free space: Unknown</div>
<div class="t" style="left:1125px;top:1941.00px;font-size:13.75px;">DHT: 151 nodes</div>
<div class="r" style="left:1105px;top:1941px;width:3px;height:22.5px;background:#ffffff;"></div>
<div class="r" style="left:1239.5px;top:1941px;width:3px;height:22.5px;background:#ffffff;"></div>
<div class="r" style="left:1296.5px;top:1941px;width:3px;height:22.5px;background:#ffffff;"></div>
<div class="r" style="left:1355px;top:1941px;width:3px;height:22.5px;background:#ffffff;"></div>
<div class="r" style="left:1636px;top:1941px;width:3px;height:22.5px;background:#ffffff;"></div>
<svg class="r" style="left:1260px;top:1941.5px;" width="20" height="20" viewBox="0 0 20 20"><path fill="#ff8c00" d="M10.1,-0.2 C10.8,3.4 17.5,6.6 17.5,11.8 A7.35,7.2 0 0 1 2.8,11.8 C2.8,7.4 8.6,4.6 10.1,-0.2 Z"/><path fill="#121212" d="M10.1,8.8 C11,10.8 12.7,12.2 12.7,14.4 A2.6,2.6 0 0 1 7.5,14.4 C7.5,12.2 9.2,10.8 10.1,8.8 Z"/></svg>
<svg class="r" style="left:1317.5px;top:1941.5px;" width="21" height="20" viewBox="0 0 21 20"><g fill="none" stroke="#1e90ff" stroke-width="3.2"><path d="M3.9,16.4 A7.8,7.8 0 0 1 12.6,3.4"/><path d="M16.6,7 A7.8,7.8 0 0 1 16,16.4"/></g><path fill="#32cd32" stroke="#32cd32" stroke-width="1" stroke-linejoin="round" d="M16.2,3.4 L11.9,12.2 A2.3,2.3 0 1 1 8.3,9.4 Z"/></svg>
<svg class="r" style="left:1374.6px;top:1941.6px;" width="20" height="20" viewBox="0 0 20 20"><g fill="none" stroke="#008000" stroke-width="3.4" stroke-linejoin="miter"><polyline points="3.2,2.1 10,7.6 16.8,2.1"/><polyline points="3.2,10.8 10,16.3 16.8,10.8"/></g></svg>
<div class="t" style="left:1401.3px;top:1942.00px;font-size:13.75px;">11.8 MiB/s (83.9 MiB)</div>
<svg class="r" style="left:1656px;top:1941.6px;" width="20" height="20" viewBox="0 0 20 20"><g fill="none" stroke="#4169e1" stroke-width="3.4" stroke-linejoin="miter"><polyline points="3.2,8.1 10,2.6 16.8,8.1"/><polyline points="3.2,16.8 10,11.3 16.8,16.8"/></g></svg>
<div class="t" style="left:1682.5px;top:1942.00px;font-size:13.75px;">0 B/s (0 B)</div>
</div>
</body></html>
